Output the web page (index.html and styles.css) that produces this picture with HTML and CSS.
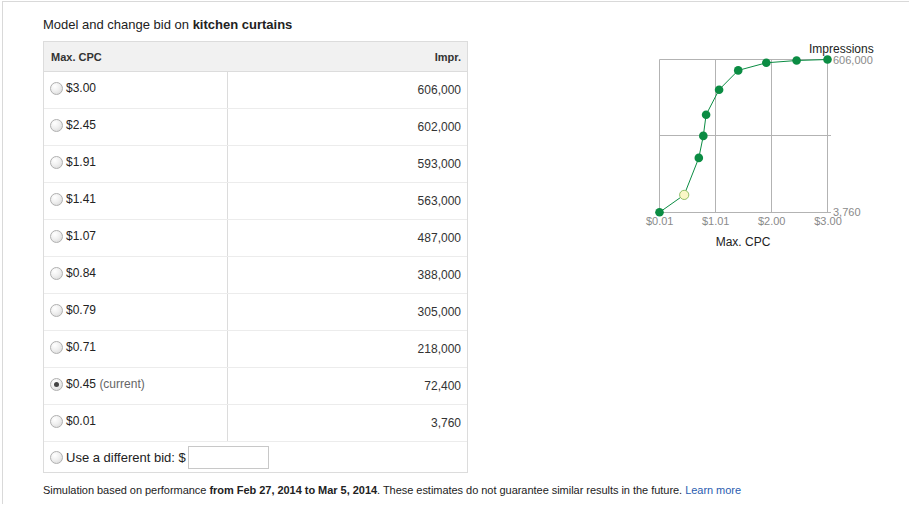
FILE: index.html
```html
<!DOCTYPE html>
<html>
<head>
<meta charset="utf-8">
<link rel="stylesheet" href="styles.css">
</head>
<body>
<div class="frame">
  <div class="main">
    <div class="left">
      <h2 class="title">Model and change bid on <b>kitchen curtains</b></h2>
      <div class="tbl">
        <div class="head"><span>Max. CPC</span><span>Impr.</span></div>
        <div class="row"><div class="cell-l"><span class="radio"></span>$3.00</div><div class="cell-r">606,000</div></div>
        <div class="row"><div class="cell-l"><span class="radio"></span>$2.45</div><div class="cell-r">602,000</div></div>
        <div class="row"><div class="cell-l"><span class="radio"></span>$1.91</div><div class="cell-r">593,000</div></div>
        <div class="row"><div class="cell-l"><span class="radio"></span>$1.41</div><div class="cell-r">563,000</div></div>
        <div class="row"><div class="cell-l"><span class="radio"></span>$1.07</div><div class="cell-r">487,000</div></div>
        <div class="row"><div class="cell-l"><span class="radio"></span>$0.84</div><div class="cell-r">388,000</div></div>
        <div class="row"><div class="cell-l"><span class="radio"></span>$0.79</div><div class="cell-r">305,000</div></div>
        <div class="row"><div class="cell-l"><span class="radio"></span>$0.71</div><div class="cell-r">218,000</div></div>
        <div class="row"><div class="cell-l"><span class="radio checked"></span>$0.45&nbsp;<span class="muted">(current)</span></div><div class="cell-r">72,400</div></div>
        <div class="row"><div class="cell-l"><span class="radio"></span>$0.01</div><div class="cell-r">3,760</div></div>
        <div class="row-last"><span class="radio"></span><span class="diff">Use a different bid: $</span><span class="input"></span></div>
      </div>
    </div>
    <div class="chart">
      <svg width="260" height="215" viewBox="0 0 260 215" xmlns="http://www.w3.org/2000/svg">
        <g stroke="#b3b3b3" stroke-width="1" fill="none">
          <line x1="18.5" y1="19.5" x2="186.5" y2="19.5"/>
          <line x1="18.5" y1="95.5" x2="190" y2="95.5"/>
          <line x1="18.5" y1="172.5" x2="190" y2="172.5"/>
          <line x1="18.5" y1="19.5" x2="18.5" y2="172"/>
          <line x1="74.5" y1="19.5" x2="74.5" y2="172"/>
          <line x1="130.5" y1="19.5" x2="130.5" y2="172"/>
          <line x1="186.5" y1="19.5" x2="186.5" y2="172"/>
        </g>
        <polyline fill="none" stroke="#0b8c43" stroke-width="1" points="18.5,172.3 43.2,154.9 57.8,117.9 62.3,95.9 65.1,74.8 78.1,49.7 97.2,30.4 125.3,22.8 155.6,20.5 186.5,19.5"/>
        <g fill="#0b8c43">
          <circle cx="18.5" cy="172.3" r="4.3"/>
          <circle cx="57.8" cy="117.9" r="4.3"/>
          <circle cx="62.3" cy="95.9" r="4.3"/>
          <circle cx="65.1" cy="74.8" r="4.3"/>
          <circle cx="78.1" cy="49.7" r="4.3"/>
          <circle cx="97.2" cy="30.4" r="4.3"/>
          <circle cx="125.3" cy="22.8" r="4.3"/>
          <circle cx="155.6" cy="20.5" r="4.3"/>
          <circle cx="186.5" cy="19.5" r="4.3"/>
        </g>
        <circle cx="43.2" cy="154.9" r="4.6" fill="#fbf7c6" stroke="#93c06a" stroke-width="1"/>
        <g font-family="'Liberation Sans', Arial, sans-serif">
          <text x="168" y="13" font-size="12" fill="#222">Impressions</text>
          <text x="192" y="23.5" font-size="11" fill="#8a8a8a">606,000</text>
          <text x="192" y="176" font-size="11" fill="#8a8a8a">3,760</text>
          <text x="18.7" y="185" font-size="11" fill="#8a8a8a" text-anchor="middle">$0.01</text>
          <text x="74.7" y="185" font-size="11" fill="#8a8a8a" text-anchor="middle">$1.01</text>
          <text x="130.7" y="185" font-size="11" fill="#8a8a8a" text-anchor="middle">$2.00</text>
          <text x="187" y="185" font-size="11" fill="#8a8a8a" text-anchor="middle">$3.00</text>
          <text x="102" y="205.5" font-size="12" fill="#222" text-anchor="middle">Max. CPC</text>
        </g>
      </svg>
    </div>
  </div>
  <p class="note">Simulation based on performance <b>from Feb 27, 2014 to Mar 5, 2014</b>. These estimates do not guarantee similar results in the future. <a class="link" href="#">Learn more</a></p>
</div>
</body>
</html>
```

FILE: styles.css
```css
html, body {
  margin: 0;
  padding: 0;
  background: #fff;
}
body {
  font-family: "Liberation Sans", Arial, sans-serif;
  color: #222;
}
.frame {
  margin: 1px 0 0 2px;
  width: 866px;
  height: 489px;
  border-top: 1px solid #d9d9d9;
  border-left: 1px solid #d9d9d9;
  padding: 13px 0 0 40px;
}
.main {
  display: flex;
  align-items: flex-start;
}
.left {
  width: 425px;
}
.title {
  margin: 0 0 8px 0;
  font-size: 13px;
  line-height: 17px;
  font-weight: normal;
  color: #222;
  padding-top: 1px;
}
.title b {
  font-weight: bold;
}
.tbl {
  box-sizing: border-box;
  width: 425px;
  border: 1px solid #dcdcdc;
}
.head {
  display: flex;
  justify-content: space-between;
  align-items: center;
  height: 29px;
  padding: 0 6px 0 7px;
  background: #f1f1f1;
  border-bottom: 1px solid #dcdcdc;
  font-size: 11px;
  font-weight: bold;
  color: #333;
}
.row {
  display: grid;
  grid-template-columns: 184px 1fr;
  height: 37px;
  box-sizing: border-box;
  border-bottom: 1px solid #ececec;
  font-size: 12px;
  line-height: 15px;
}
.cell-l {
  box-sizing: border-box;
  border-right: 1px solid #dcdcdc;
  padding: 9px 0 0 6px;
  display: flex;
  align-items: flex-start;
  color: #222;
}
.cell-r {
  padding: 11px 6px 0 0;
  text-align: right;
  color: #333;
}
.muted {
  color: #666;
}
.radio {
  box-sizing: border-box;
  display: inline-block;
  width: 13px;
  height: 13px;
  margin: 1px 3px 0 0;
  border-radius: 50%;
  border: 1px solid #b0b0b0;
  background: radial-gradient(circle at 35% 30%, #ffffff 0%, #f0f0f0 45%, #d4d4d4 100%);
  position: relative;
  flex: none;
}
.radio.checked::after {
  content: "";
  position: absolute;
  left: 3px;
  top: 3px;
  width: 5px;
  height: 5px;
  border-radius: 50%;
  background: #444;
}
.row-last {
  display: flex;
  align-items: center;
  height: 30px;
  padding-left: 6px;
  font-size: 13px;
  color: #222;
}
.row-last .radio {
  margin: 0 3px 0 0;
}
.input {
  box-sizing: border-box;
  display: inline-block;
  width: 81px;
  height: 23px;
  margin-left: 2px;
  border: 1px solid #c8c8c8;
  background: #fff;
}
.chart {
  margin: 25px 0 0 173px;
}
.chart svg {
  display: block;
}
.note {
  margin: 10px 0 0 0;
  font-size: 11px;
  line-height: 14px;
  color: #222;
  letter-spacing: -0.035px;
}
.note b {
  font-weight: bold;
}
.link {
  color: #2a5db0;
  text-decoration: none;
}
```
